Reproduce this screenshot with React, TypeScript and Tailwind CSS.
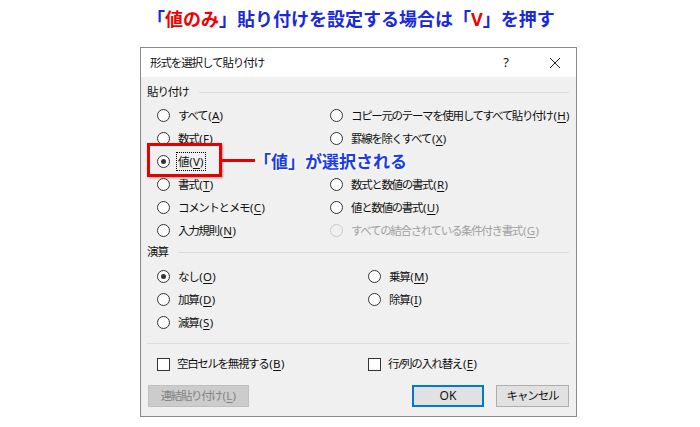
import React from 'react';

type Opt = { label: string; key: string; checked?: boolean; disabled?: boolean; focus?: boolean } | null;

const font = "font-['Noto_Sans','Noto_Sans_CJK_JP',sans-serif]";

function Label({ label, k }: { label: string; k: string }) {
  return (
    <>
      <span className="tracking-[-1.35px]">{label}</span>
      <span className="tracking-[0.3px] ml-[1px]">
        (<span className="underline underline-offset-2">{k}</span>)
      </span>
    </>
  );
}

function Radio({ opt }: { opt: Opt }) {
  if (!opt) return <div className="h-[23px]" />;
  return (
    <div className="flex items-center h-[23px]">
      <span
        className={
          'w-[13px] h-[13px] rounded-full border flex items-center justify-center shrink-0 ' +
          (opt.disabled ? 'border-[#c8c8c8] bg-[#f0f0f0]' : 'border-[#333] bg-white')
        }
      >
        {opt.checked && <span className="w-[5px] h-[5px] rounded-full bg-[#333]" />}
      </span>
      <span
        className={
          'ml-[6px] whitespace-nowrap leading-[17px] px-[1px] ' +
          (opt.disabled ? 'text-[#a0a0a0] ' : 'text-[#111] ') +
          (opt.focus ? 'border border-dotted border-black' : 'border border-transparent')
        }
      >
        <Label label={opt.label} k={opt.key} />
      </span>
    </div>
  );
}

function Check({ label, k }: { label: string; k: string }) {
  return (
    <div className="flex items-center h-[20px]">
      <span className="w-[13px] h-[13px] border border-[#333] bg-white shrink-0" />
      <span className="ml-[7px] whitespace-nowrap text-[#111]">
        <Label label={label} k={k} />
      </span>
    </div>
  );
}

function GroupHeader({ title }: { title: string }) {
  return (
    <div className="flex items-center h-[16px]">
      <span className="text-[#111] tracking-[-1.1px]">{title}</span>
      <div className="flex-1 h-px bg-[#dcdcdc] ml-[10px]" />
    </div>
  );
}

const pasteOpts: Opt[] = [
  { label: 'すべて', key: 'A' },
  { label: 'コピー元のテーマを使用してすべて貼り付け', key: 'H' },
  { label: '数式', key: 'F' },
  { label: '罫線を除くすべて', key: 'X' },
  { label: '値', key: 'V', checked: true, focus: true },
  null,
  { label: '書式', key: 'T' },
  { label: '数式と数値の書式', key: 'R' },
  { label: 'コメントとメモ', key: 'C' },
  { label: '値と数値の書式', key: 'U' },
  { label: '入力規則', key: 'N' },
  { label: 'すべての結合されている条件付き書式', key: 'G', disabled: true },
];

const opOpts: Opt[] = [
  { label: 'なし', key: 'O', checked: true },
  { label: '乗算', key: 'M' },
  { label: '加算', key: 'D' },
  { label: '除算', key: 'I' },
  { label: '減算', key: 'S' },
  null,
];

export default function App() {
  return (
    <div className={'relative w-[700px] h-[427px] bg-white overflow-hidden ' + font}>
      {/* 見出し */}
      <div className="pt-[7px] pl-[147px] h-[31px] text-[18px] leading-[24px] font-bold text-[#1a2ad8] whitespace-nowrap">
        「<span className="text-[#f00000]">値のみ</span>」貼り付けを設定する場合は「<span className="text-[#f00000]">V</span>」を押す
      </div>

      {/* ダイアログ */}
      <div className="mt-[16px] ml-[140px] w-[437px] border border-[#8a8a8a] text-[11.5px]">
        <div className="h-[29px] bg-white flex items-center pl-[9px] text-[#111]">
          <span className="tracking-[-1.1px]">形式を選択して貼り付け</span>
          <div className="ml-auto flex items-center">
            <span className="w-[30px] text-center text-[13px]">?</span>
            <span className="w-[32px] ml-[18px] flex justify-center">
              <svg width="12" height="12" viewBox="0 0 12 12">
                <path d="M1 1 L11 11 M11 1 L1 11" stroke="#222" strokeWidth="1" />
              </svg>
            </span>
            <span className="w-[5px]" />
          </div>
        </div>

        <div className="bg-[#f0f0f0] pl-[6px] pr-[7px] pt-[7px] pb-[9px]">
          <GroupHeader title="貼り付け" />
          <div className="mt-[4px] pl-[10px] grid grid-cols-[173px_1fr]">
            {pasteOpts.map((o, i) => (
              <Radio key={i} opt={o} />
            ))}
          </div>

          <div className="mt-[2px]">
            <GroupHeader title="演算" />
          </div>
          <div className="mt-[5px] pl-[10px] grid grid-cols-[211px_1fr]">
            {opOpts.map((o, i) => (
              <Radio key={i} opt={o} />
            ))}
          </div>

          <div className="mt-[9px] h-px bg-[#dcdcdc]" />

          <div className="mt-[10px] pl-[10px] grid grid-cols-[211px_1fr]">
            <Check label="空白セルを無視する" k="B" />
            <Check label="行/列の入れ替え" k="E" />
          </div>

          <div className="mt-[11px] flex items-center">
            <button className="ml-[1px] w-[101px] h-[22px] bg-[#cccccc] border border-[#bfbfbf] text-[#838383]">
              <Label label="連結貼り付け" k="L" />
            </button>
            <button className="ml-auto w-[72px] h-[22px] bg-[#e1e1e1] border-2 border-[#0078d7] text-[#111] text-[12px]">
              OK
            </button>
            <button className="ml-[12px] w-[73px] h-[22px] bg-[#e1e1e1] border border-[#adadad] text-[#111] tracking-[-1.1px]">
              キャンセル
            </button>
          </div>
        </div>
      </div>

      {/* 注釈 */}
      <div className="absolute left-[147px] top-[143px] w-[75px] h-[34px] border-[3px] border-[#e60000] shadow-[1px_1px_2px_rgba(0,0,0,0.35)]" />
      <div className="absolute left-[221px] top-[159px] w-[34px] h-[3px] bg-[#e60000]" />
      <div className="absolute left-[254px] top-[150px] h-[24px] leading-[24px] text-[17px] font-bold text-[#1a3ce8] whitespace-nowrap [text-shadow:0_0_2px_#fff,0_0_3px_#fff,0_0_4px_#fff]">
        「値」が選択される
      </div>
    </div>
  );
}
